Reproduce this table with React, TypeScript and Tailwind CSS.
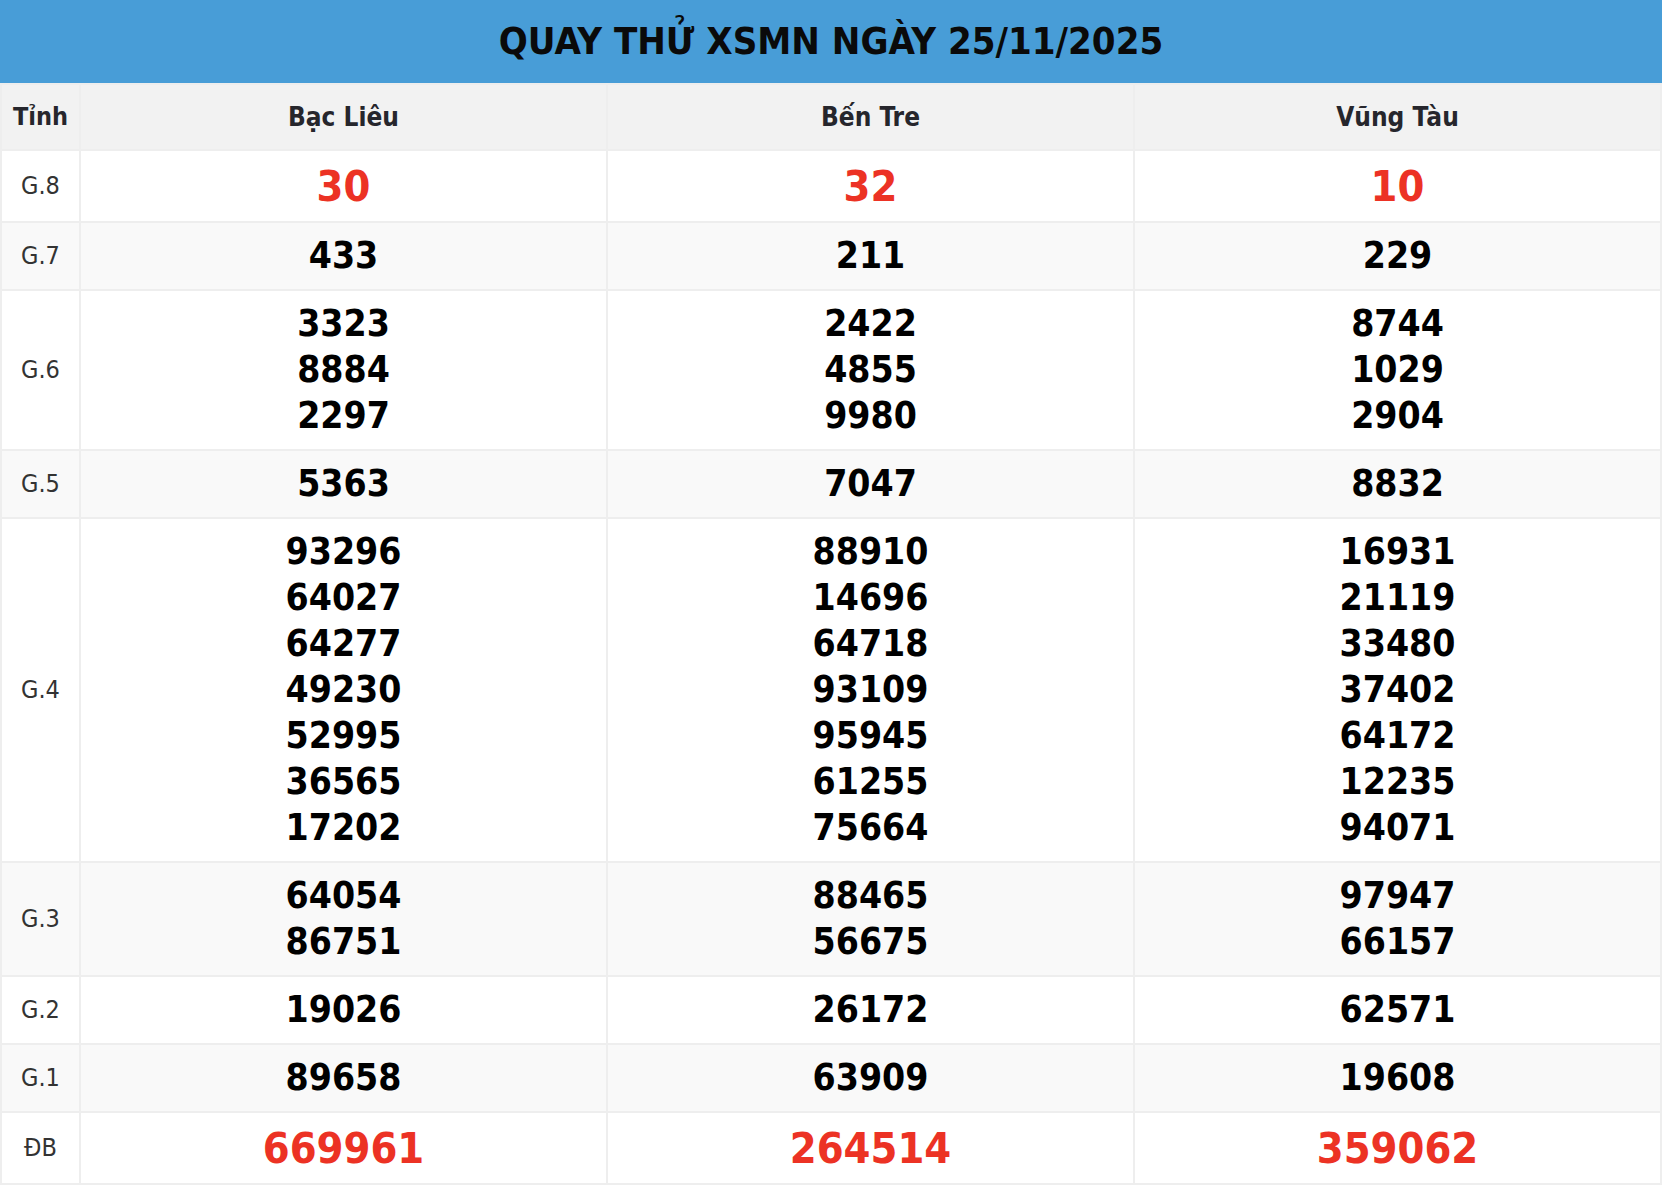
import React from 'react'

interface PrizeRow {
    label: string;
    values: string[][];
    red?: boolean;
}

const provinces = ['Bạc Liêu', 'Bến Tre', 'Vũng Tàu']

const rows: PrizeRow[] = [
    { label: 'G.8', values: [['30'], ['32'], ['10']], red: true },
    { label: 'G.7', values: [['433'], ['211'], ['229']] },
    { label: 'G.6', values: [['3323', '8884', '2297'], ['2422', '4855', '9980'], ['8744', '1029', '2904']] },
    { label: 'G.5', values: [['5363'], ['7047'], ['8832']] },
    {
        label: 'G.4',
        values: [
            ['93296', '64027', '64277', '49230', '52995', '36565', '17202'],
            ['88910', '14696', '64718', '93109', '95945', '61255', '75664'],
            ['16931', '21119', '33480', '37402', '64172', '12235', '94071'],
        ],
    },
    { label: 'G.3', values: [['64054', '86751'], ['88465', '56675'], ['97947', '66157']] },
    { label: 'G.2', values: [['19026'], ['26172'], ['62571']] },
    { label: 'G.1', values: [['89658'], ['63909'], ['19608']] },
    { label: 'ĐB', values: [['669961'], ['264514'], ['359062']], red: true },
]

const App = () => {
    return (
        <div className="w-[1662px] bg-white font-['DejaVu_Sans_Condensed','DejaVu_Sans',sans-serif]">
            <div className="h-[83px] bg-[#489dd7] flex items-center justify-center">
                <h1 className="text-[38px] font-bold text-[#0a0a0a]">QUAY THỬ XSMN NGÀY 25/11/2025</h1>
            </div>
            <table className="w-full border-collapse border-2 border-[#eeeeee] table-fixed">
                <colgroup>
                    <col className="w-[79px]" />
                    <col />
                    <col />
                    <col />
                </colgroup>
                <thead>
                    <tr className="bg-[#f2f2f2] h-[66px]">
                        <th className="border-2 border-[#eeeeee] text-left pl-[11px] text-[25px] font-bold text-[#26262c]">Tỉnh</th>
                        {provinces.map((p) => (
                            <th key={p} className="border-2 border-[#eeeeee] text-center text-[26px] font-bold text-[#26262c]">{p}</th>
                        ))}
                    </tr>
                </thead>
                <tbody>
                    {rows.map((row, i) => (
                        <tr key={row.label} className={i % 2 === 1 ? 'bg-[#f9f9f9]' : 'bg-white'}>
                            <td className="border-2 border-[#eeeeee] text-center text-[25px] text-[#333333]">{row.label}</td>
                            {row.values.map((col, j) => (
                                <td key={j} className={row.red ? 'border-2 border-[#eeeeee] text-center py-[9px] leading-[52px]' : 'border-2 border-[#eeeeee] text-center py-[10px] leading-[46px]'}>
                                    {col.map((v, k) => (
                                        <div key={k} className={row.red ? 'text-[43px] font-bold text-[#ec3224]' : 'text-[37px] font-bold text-black'}>{v}</div>
                                    ))}
                                </td>
                            ))}
                        </tr>
                    ))}
                </tbody>
            </table>
        </div>
    )
}

export default App
